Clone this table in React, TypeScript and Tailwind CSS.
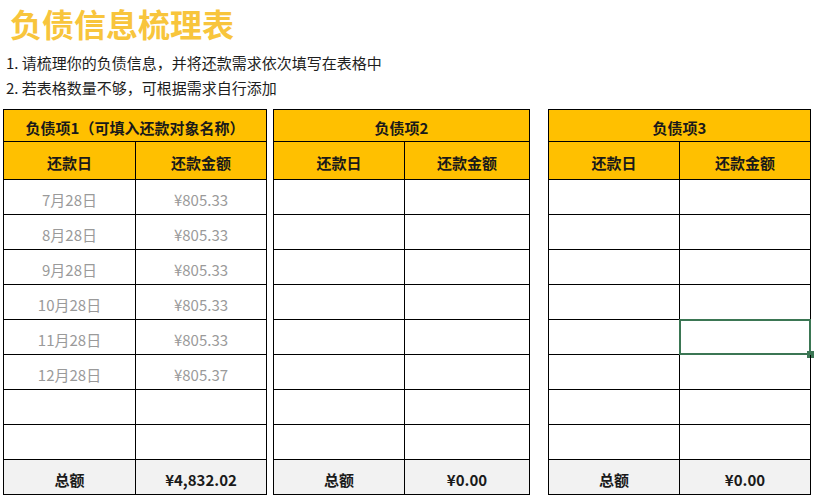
import React from "react";

const font = { fontFamily: '"Noto Sans CJK SC", "Noto Sans", sans-serif' };

type Row = [string, string];

function DebtTable({
  title,
  w1,
  w2,
  rows,
  total,
  selected,
  className,
}: {
  title: string;
  w1: string;
  w2: string;
  rows: Row[];
  total: string;
  selected?: number;
  className?: string;
}) {
  const data: Row[] = [...rows];
  while (data.length < 8) data.push(["", ""]);
  return (
    <div className={"border-l border-t border-black shrink-0 " + (className ?? "")}>
      <div className="flex h-[32px] pt-[5px] bg-[#ffc000] border-b border-r border-black items-center justify-center text-[15px] font-bold text-[#1a1a1a]">
        {title}
      </div>
      <div className="flex h-[38px] bg-[#ffc000] border-b border-black text-[15px] font-bold text-[#1a1a1a]">
        <div className={w1 + " pt-[6px] border-r border-black flex items-center justify-center"}>还款日</div>
        <div className={w2 + " pt-[6px] border-r border-black flex items-center justify-center"}>还款金额</div>
      </div>
      {data.map((r, i) => (
        <div key={i} className="flex h-[35px] border-b border-black text-[15px] text-[#9a9a9a]">
          <div className={w1 + " pt-[6px] border-r border-black flex items-center justify-center"}>{r[0]}</div>
          <div className={w2 + " pt-[6px] border-r border-black flex items-center justify-center relative"}>
            {r[1]}
            {selected === i && (
              <>
                <div className="absolute left-[-1px] top-[-1px] right-[-1px] bottom-[-1px] border-2 border-[#3b7654]" />
                <div className="absolute right-[-4px] bottom-[-4px] w-[7px] h-[7px] bg-[#3b7654]" />
              </>
            )}
          </div>
        </div>
      ))}
      <div className="flex h-[35px] border-b border-black bg-[#f2f2f2] text-[15px] font-bold text-[#1a1a1a]">
        <div className={w1 + " pt-[6px] border-r border-black flex items-center justify-center"}>总额</div>
        <div className={w2 + " pt-[6px] border-r border-black flex items-center justify-center"}>{total}</div>
      </div>
    </div>
  );
}

export default function App() {
  const rows1: Row[] = [
    ["7月28日", "¥805.33"],
    ["8月28日", "¥805.33"],
    ["9月28日", "¥805.33"],
    ["10月28日", "¥805.33"],
    ["11月28日", "¥805.33"],
    ["12月28日", "¥805.37"],
  ];
  return (
    <div className="w-[818px] h-[501px] bg-white overflow-hidden" style={font}>
      <div className="pl-[10px] pt-[5px] h-[40px] text-[32px] leading-[36px] font-semibold text-[#f8c53c]">
        负债信息梳理表
      </div>
      <div className="pl-[6px] pt-[10px] text-[15px] leading-[25px] text-[#1e1e1e]">
        <div>1. 请梳理你的负债信息，并将还款需求依次填写在表格中</div>
        <div>2. 若表格数量不够，可根据需求自行添加</div>
      </div>
      <div className="flex pl-[3px] pt-[9px]">
        <DebtTable
          title="负债项1（可填入还款对象名称）"
          w1="w-[132px]"
          w2="w-[131px]"
          rows={rows1}
          total="¥4,832.02"
        />
        <DebtTable title="负债项2" w1="w-[131px]" w2="w-[125px]" rows={[]} total="¥0.00" className="ml-[6px]" />
        <DebtTable
          title="负债项3"
          w1="w-[131px]"
          w2="w-[131px]"
          rows={[]}
          total="¥0.00"
          selected={4}
          className="ml-[18px]"
        />
      </div>
    </div>
  );
}
